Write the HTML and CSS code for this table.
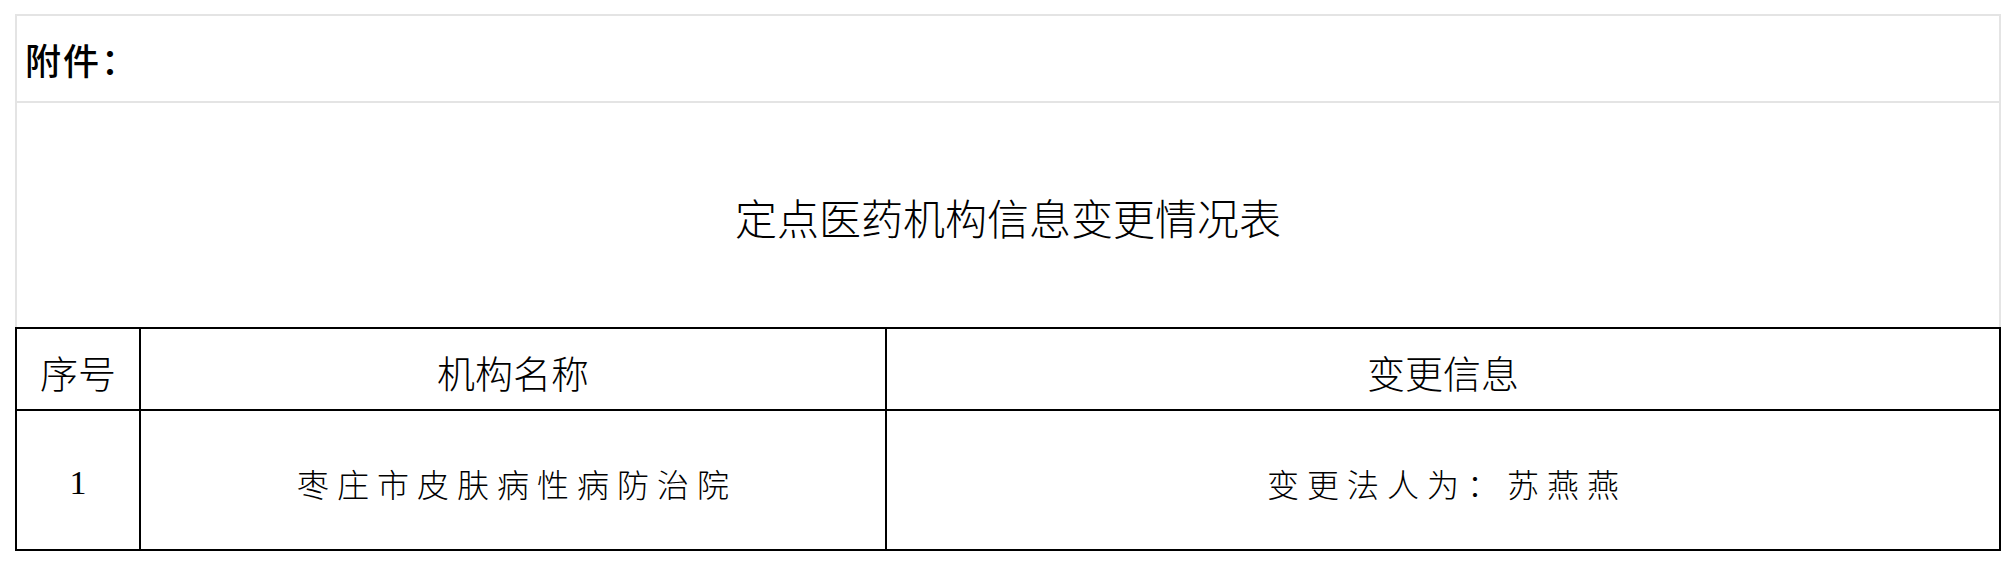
FILE: index.html
```html
<!DOCTYPE html>
<html lang="zh-CN">
<head>
<meta charset="utf-8">
<title>定点医药机构信息变更情况表</title>
<link rel="stylesheet" href="styles.css">
</head>
<body>
<div class="sheet">
  <div class="head">
    <div class="attach">附件：</div>
    <div class="title">定点医药机构信息变更情况表</div>
  </div>
  <div class="grid">
    <div class="cell th">序号</div>
    <div class="cell th">机构名称</div>
    <div class="cell th">变更信息</div>
    <div class="cell td num">1</div>
    <div class="cell td spaced">枣庄市皮肤病性病防治院</div>
    <div class="cell td spaced">变更法人为：苏燕燕</div>
  </div>
</div>
</body>
</html>
```

FILE: styles.css
```css
html, body {
  margin: 0;
  padding: 0;
  background: #ffffff;
}

body {
  font-family: "Liberation Serif", "Noto Sans CJK SC", serif;
  color: #000000;
}

.sheet {
  margin: 14px 0 0 15px;
  width: 1986px;
}

.head {
  border: 2px solid #e4e4e4;
  border-bottom: none;
}

.attach {
  height: 87px;
  border-bottom: 2px solid #e4e4e4;
  display: flex;
  align-items: center;
  padding-left: 8px;
  box-sizing: border-box;
  font-size: 36px;
  letter-spacing: 2px;
  font-weight: 500;
  font-family: "Noto Sans CJK SC", sans-serif;
}

.title {
  height: 224px;
  display: flex;
  align-items: center;
  justify-content: center;
  padding-top: 2px;
  box-sizing: border-box;
  font-size: 42px;
  font-weight: 300;
  font-family: "Noto Sans CJK SC", sans-serif;
}

.grid {
  display: grid;
  grid-template-columns: 122px 744px 1fr;
  grid-template-rows: 80px 138px;
  gap: 2px;
  padding: 2px;
  background: #000000;
}

.cell {
  background: #ffffff;
  display: flex;
  align-items: center;
  justify-content: center;
  padding-top: 5px;
  box-sizing: border-box;
}

.th {
  font-size: 38px;
  font-weight: 300;
}

.td {
  font-size: 32px;
  font-weight: 300;
}

.num {
  font-size: 34px;
}

.spaced {
  letter-spacing: 8px;
  padding-left: 8px;
}
```
